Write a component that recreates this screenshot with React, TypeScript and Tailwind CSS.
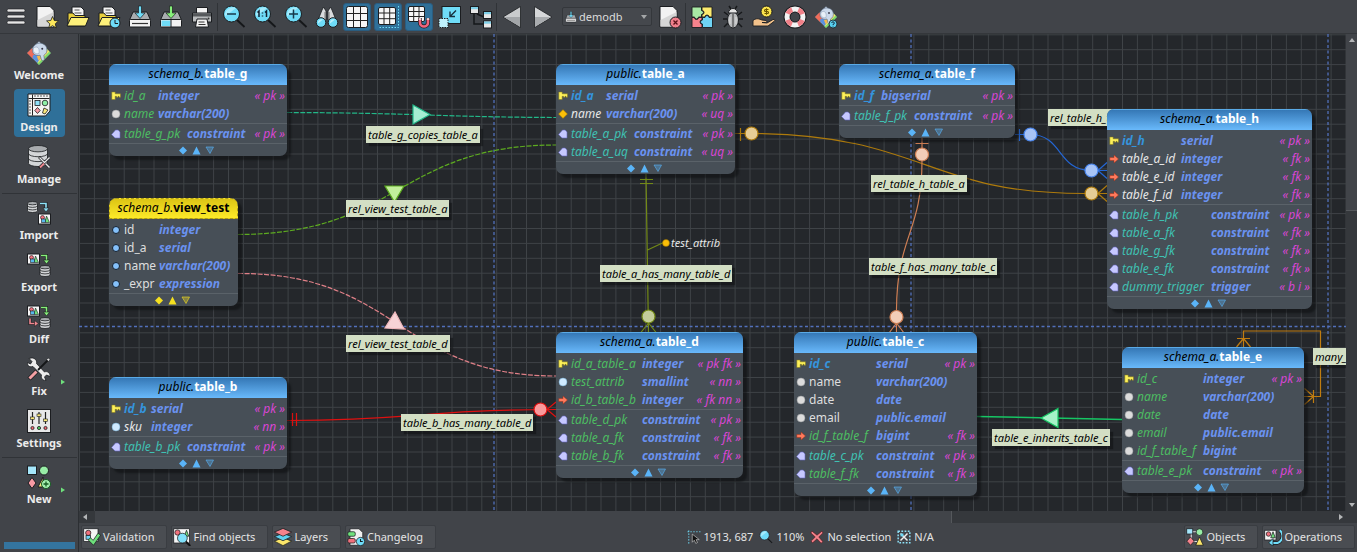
import type { ReactNode } from 'react';
import clsx from 'clsx';

/* ------------------------------------------------------------------ */
/* Icons                                                               */
/* ------------------------------------------------------------------ */

const OUT = '#1b1d20';

function Svg({ size = 24, children }: { size?: number; children: ReactNode }) {
  return (
    <svg width={size} height={size} viewBox="0 0 24 24" fill="none" className="shrink-0" aria-hidden="true">
      {children}
    </svg>
  );
}

const MenuIcon = () => (
  <Svg>
    {[4, 10, 16].map(y => (
      <rect key={y} x="3" y={y} width="18" height="3" rx="1.5" fill="#e6e6e6" stroke={OUT} strokeWidth=".6" />
    ))}
  </Svg>
);

const Sheet = () => (
  <>
    <path d="M2 1.5h13l4 4V22H2z" fill="#f2f2f2" stroke={OUT} />
    <path d="M2.5 21.5V15L18.5 7v14.5z" fill="#d6d6d6" />
  </>
);

const NewIcon = () => (
  <Svg>
    <Sheet />
    <path d="m17.500 11.500 1.800 4 4.200.400-3.200 2.900 1 4.200-3.800-2.300-3.700 2.300 1-4.200-3.200-2.900 4.200-.4z" fill="#fde85c" stroke={OUT} strokeWidth=".8" />
  </Svg>
);

const Folder = () => (
  <>
    <path d="M6 2h9l3 3v9H6z" fill="#f4f4f4" stroke={OUT} />
    <path d="M8.500 5h5M8.500 8h7" stroke="#555" />
    <path d="M2 8h5l2 2.500h10V21H2z" fill="#e8cf3c" stroke={OUT} />
    <path d="M1 21 5 12.500h18L19.500 21z" fill="#fdf07a" stroke={OUT} />
  </>
);

const OpenIcon = () => <Svg><Folder /></Svg>;

const RecentIcon = () => (
  <Svg>
    <Folder />
    <circle cx="18" cy="18" r="5" fill="#6fdcf8" stroke={OUT} />
    <path d="M18 15v3.500h3" stroke={OUT} />
  </Svg>
);

function Drive({ arrow, split }: { arrow: string; split?: boolean }) {
  return (
    <>
      <path d="M5 7h14l3.500 8H1.500z" fill="#a9acaf" stroke={OUT} />
      <rect x="1.500" y="14.500" width="21" height="7.500" rx="1" fill="#f2f2f2" stroke={OUT} />
      {split ? (
        <>
          <rect x="2.500" y="15.500" width="9" height="5.500" fill="#6fdcf8" />
          <path d="M12 15v7" stroke={OUT} />
        </>
      ) : (
        <path d="M4 18.500h16" stroke="#333" strokeWidth="1.200" />
      )}
      <path d="M10.500 1h3v7h3.500L12 13.500 7 8h3.500z" fill={arrow} stroke={OUT} strokeWidth=".7" />
    </>
  );
}

const SaveIcon = () => <Svg><Drive arrow="#6fdcf8" /></Svg>;
const SaveAsIcon = () => <Svg><Drive arrow="#86f07a" split /></Svg>;

const PrintIcon = () => (
  <Svg>
    <path d="M6.500 2.500h11v6h-11z" fill="#f3f3f3" stroke={OUT} />
    <path d="M2.500 8h19v9h-19z" fill="#b9bbbd" stroke={OUT} />
    <path d="M3 8.500h18v3H3z" fill="#55585b" />
    <circle cx="18.500" cy="13.500" r="1" fill="#333" />
    <path d="M7 14h10l1.500 8h-13z" fill="#f3f3f3" stroke={OUT} />
    <path d="M8.500 17h6M8.500 19.500h7" stroke="#333" />
  </Svg>
);

function ZoomIcon({ kind, size }: { kind?: 'in' | 'out' | 'one'; size?: number }) {
  return (
    <Svg size={size}>
      <path d="m14 14 8.500 8" stroke="#15171a" strokeWidth="1.800" />
      <circle cx="9.500" cy="9" r="8" fill="#6fdcf8" stroke={OUT} />
      <path d="M3 11.500a8 8 0 0 1 11-8.500z" fill="#a5ebfc" />
      {(kind === 'in' || kind === 'out') && <path d="M5 9h9" stroke="#17384a" strokeWidth="1.500" />}
      {kind === 'in' && <path d="M9.500 4.500v9" stroke="#17384a" strokeWidth="1.500" />}
      {kind === 'one' && <path d="M4.500 7.500 6 6v6m6-4.500L13.500 6v6M9.500 7.500v1m0 2v1" stroke="#123" strokeWidth="1.500" />}
    </Svg>
  );
}

const BinocularsIcon = () => (
  <Svg>
    <path d="M8.500 2 11 6v9H3L7 5zM15.500 2 13 6v9h8L17 5z" fill="#d9dbdd" stroke={OUT} strokeWidth=".8" />
    <path d="M10 7v7m4-7v7" stroke="#777" />
    <circle cx="6" cy="17.500" r="4.800" fill="#6fdcf8" stroke={OUT} />
    <circle cx="18" cy="17.500" r="4.800" fill="#6fdcf8" stroke={OUT} />
    <path d="M3 18.500a3.600 3.600 0 0 1 5-4zM15 18.500a3.600 3.600 0 0 1 5-4z" fill="#b9f0fc" />
  </Svg>
);

const GridIcon = () => (
  <Svg>
    <rect x="1.500" y="1.500" width="21" height="21" rx="2" fill="#f6f6f6" stroke={OUT} />
    <path d="M8.500 2v20M15.500 2v20M2 8.500h20M2 15.500h20" stroke="#222" />
  </Svg>
);

const PageGridIcon = () => (
  <Svg>
    <rect x="2.500" y="2.500" width="17" height="17" rx="1.500" fill="#f6f6f6" stroke={OUT} />
    <path d="M8 3v16M13.700 3v16M3 8h16M3 13.700h16" stroke="#222" />
    <path d="M22.500 1v21.500H2" stroke="#6fdcf8" strokeDasharray="1.500 1.500" />
  </Svg>
);

const MagnetGridIcon = () => (
  <Svg>
    <rect x="1.500" y="1.500" width="16" height="15" rx="1.500" fill="#f6f6f6" stroke={OUT} />
    <path d="M6.700 2v14M12 2v14M2 6.500h15M2 11.500h15" stroke="#222" />
    <path d="M13 13v4.500a4 4 0 0 0 8 0V13" stroke={OUT} strokeWidth="4" />
    <path d="M13 13.500v4a4 4 0 0 0 8 0v-4" stroke="#f0647c" strokeWidth="2.600" />
    <path d="M11.700 14h2.600m5.400 0h2.600" stroke="#f4f4f4" strokeWidth="1.600" />
  </Svg>
);

const ExpandIcon = () => (
  <Svg>
    <rect x="4" y="1.500" width="18.500" height="17" fill="#6fdcf8" stroke={OUT} />
    <rect x="1" y="13.500" width="9" height="9" fill="#bff1fd" stroke={OUT} strokeDasharray="1.500 1" />
    <path d="M18 5.500 12 11.500m0-5v5h5" stroke="#173040" strokeWidth="1.400" />
  </Svg>
);

const TreeIcon = () => (
  <Svg>
    <path d="M5 9v10h9M8 9l7 3" stroke="#15171a" strokeWidth="1.500" />
    {[[1.500, 1.500], [14.500, 6.500], [14.500, 16]].map(([x, y]) => (
      <g key={y}>
        <rect x={x} y={y} width="8" height="7" fill="#e8e8e8" stroke={OUT} />
        <rect x={x + 0.500} y={y + 0.500} width="7" height="2.200" fill="#7fd0e8" />
      </g>
    ))}
  </Svg>
);

const PrevIcon = () => (
  <Svg>
    <path d="M20.500 1.500v21L3 12z" fill="#c9cbcd" stroke={OUT} strokeWidth=".8" />
    <path d="M20 12v9.700L4 12z" fill="#a3a6a9" />
  </Svg>
);

const NextIcon = () => (
  <Svg>
    <path d="M3.500 1.500v21L21 12z" fill="#d5d7d9" stroke={OUT} strokeWidth=".8" />
    <path d="M4 12v9.700L20 12z" fill="#a9acaf" />
  </Svg>
);

const CloseDocIcon = () => (
  <Svg>
    <Sheet />
    <circle cx="17.500" cy="17.500" r="5.500" fill="#f0808c" stroke={OUT} />
    <path d="m15.500 15.500 4 4m0-4-4 4" stroke="#5a1018" strokeWidth="1.300" />
  </Svg>
);

const PuzzleIcon = () => (
  <Svg>
    <path d="M2 2h9.500v3.500a2 2 0 0 1 0 4V12H8.500a2 2 0 0 1-4 0H2z" fill="#a9e8a4" stroke={OUT} strokeWidth=".9" />
    <path d="M12 2h10v10h-3a2 2 0 0 0-4 0h-3V9.500a2 2 0 0 0 0-4z" fill="#fdeb6e" stroke={OUT} strokeWidth=".9" />
    <path d="M2 12.500h2.500a2 2 0 0 0 4 0H12V15a2 2 0 0 0 0 4v3.500H2z" fill="#f7838d" stroke={OUT} strokeWidth=".9" />
    <path d="M12.500 12.500H15a2 2 0 0 1 4 0h3.500v10h-10V19a2 2 0 0 1 0-4z" fill="#6fd4f5" stroke={OUT} strokeWidth=".9" />
  </Svg>
);

const BugIcon = () => (
  <Svg>
    <path d="M7 10 3 7M17 10l4-3M6 14H2m16 0h4M7 18l-4 4m14-4 4 4M10 4 8 1m6 3 2-3" stroke="#17191b" strokeWidth="1.500" />
    <ellipse cx="12" cy="15" rx="5.500" ry="8" fill="#b9bbbd" stroke={OUT} />
    <path d="M7.500 8a4.500 4.500 0 0 1 9 0z" fill="#e4e4e4" stroke={OUT} />
    <path d="M12 9v13" stroke="#333" />
    <path d="M9 12v7m6-7v7" stroke="#dcdcdc" />
  </Svg>
);

const DonateIcon = () => (
  <Svg>
    <circle cx="14.500" cy="6.500" r="5.500" fill="#fbe34d" stroke={OUT} />
    <path d="M16.500 4.500h-3a1 1 0 0 0 0 2h2a1 1 0 0 1 0 2h-3M14.500 3.200v6.600" stroke="#6a5600" strokeWidth="1.100" />
    <path d="M1 15.500c4-3 6-1.500 9-.5l4 .5c1.500.5 1 2-.500 2H10l5 .5 6-3.500c2-.500 2.500 1 1 2L16 21H1z" fill="#f3c28b" stroke={OUT} strokeWidth=".9" />
  </Svg>
);

const LifebuoyIcon = () => (
  <Svg>
    <circle cx="12" cy="12" r="8" stroke={OUT} strokeWidth="7" />
    <circle cx="12" cy="12" r="8" stroke="#f3f3f3" strokeWidth="5" />
    <circle cx="12" cy="12" r="8" stroke="#f08088" strokeWidth="5" strokeDasharray="6.280 6.280" strokeDashoffset="-3.140" />
  </Svg>
);

function ElephantIcon({ help }: { help?: boolean }) {
  return (
    <Svg size={help ? 24 : 26}>
      <path d="m12 1 11 11-11 11L1 12z" fill="#b9c6d8" stroke="#3a4048" strokeWidth=".6" />
      <path d="M5.500 7.500 1 12l5.500 5.500 4-4.500z" fill="#ef6c5a" />
      <path d="m18 7 5 5-11 11-2-2z" fill="#7ddb6a" />
      <path d="m19.500 8.500 2 2L11.500 21l-1.500-1.500z" fill="#fbe66a" />
      <path d="m6.500 14 5-1 2 4-3 4-4.500-4.500z" fill="#5b93e0" />
      <path d="m10 15 3-1 1 3-2.500 2z" fill="#f6b84c" />
      <path d="M10 3.500C13 2 18 3.500 19 7c1 3 0 6-2.500 7l.5 4c-1 1.500-3 1-3-.5l-1-3.500C9 15 6 13 6 9.500 6 7 7.500 4.500 10 3.500z" fill="#cbd9ea" stroke="#5a6a80" strokeWidth=".6" />
      <path d="M7 7.500c3-2.500 6-.5 5 5-3.500 1-6-1.500-5-5z" fill="#e8f0f8" stroke="#8c9cb4" strokeWidth=".5" />
      <circle cx="15" cy="8" r=".9" fill="#334" />
      {help && (
        <>
          <circle cx="19" cy="19" r="4" fill="#58d0f0" stroke={OUT} strokeWidth=".8" />
          <path d="M17.700 18a1.300 1.300 0 1 1 1.300 1.400v.6m0 .8v.7" stroke="#123" strokeWidth=".9" />
        </>
      )}
    </Svg>
  );
}

const DesignIcon = () => (
  <Svg>
    <path d="M1 1h22v17l-4.500 5H1z" fill="#f5f5f5" stroke={OUT} />
    <path d="M1.500 5.500h21M5.500 1.500v21" stroke="#222" />
    <path d="M8 2v2M11 2v2M14 2v2M17 2v2M20 2v2M2 8h2M2 11h2M2 14h2M2 17h2M2 20h2" stroke="#333" strokeWidth=".8" />
    <rect x="8" y="7.500" width="5" height="5" fill="#8fe0f8" stroke={OUT} strokeWidth=".8" />
    <circle cx="18" cy="10" r="2.800" fill="#8ff0a8" stroke={OUT} strokeWidth=".8" />
    <path d="m10.500 14.500 2.700 3-2.700 3-2.700-3z" fill="#f79aa4" stroke={OUT} strokeWidth=".8" />
    <path d="m15.500 20 1.500-5 4 2-3 4z" fill="#fbe87a" stroke={OUT} strokeWidth=".8" />
  </Svg>
);

function Cylinder({ x, y, w, h }: { x: number; y: number; w: number; h: number }) {
  const ry = w / 6;
  return (
    <g transform={`translate(${x} ${y})`} stroke={OUT} strokeWidth=".8">
      <path d={`M0 ${ry}v${h - 2 * ry}a${w / 2} ${ry} 0 0 0 ${w} 0V${ry}z`} fill="#d4d6d8" />
      {[1, 2].map(i => (
        <path key={i} d={`M0 ${ry + ((h - 2 * ry) * i) / 3}a${w / 2} ${ry} 0 0 0 ${w} 0`} />
      ))}
      <ellipse cx={w / 2} cy={ry} rx={w / 2} ry={ry} fill="#a9acaf" />
    </g>
  );
}

function Shapes({ x, y }: { x: number; y: number }) {
  return (
    <g transform={`translate(${x} ${y})`}>
      <rect x=".5" y=".5" width="12" height="10" fill="#f6f6f6" stroke={OUT} />
      <circle cx="4.500" cy="4" r="2" fill="#f0707c" stroke={OUT} strokeWidth=".6" />
      <path d="m8.500 2.500 3 6.500H7z" fill="#6ee07c" stroke={OUT} strokeWidth=".6" />
      <rect x="3.500" y="5.500" width="4" height="3.500" fill="#58b8ec" stroke={OUT} strokeWidth=".6" />
    </g>
  );
}

const Turn = ({ color, d, head }: { color: string; d: string; head: string }) => (
  <>
    <path d={d} stroke={OUT} strokeWidth="3" />
    <path d={d} stroke={color} strokeWidth="1.600" />
    <path d={head} fill={color} stroke={OUT} strokeWidth=".6" />
  </>
);

const ManageIcon = () => (
  <Svg>
    <Cylinder x={1.500} y={0.500} w={19} h={21} />
    <path d="m12 12 10 10m0-9-10 10" stroke={OUT} strokeWidth="2.600" />
    <path d="m12.500 12.500 5 5 5-5" stroke="#e8e8e8" strokeWidth="1.300" />
    <path d="m13 22.500 4-4" stroke="#f08890" strokeWidth="1.800" />
    <path d="m18.500 18.500 4 4" stroke="#e8e8e8" strokeWidth="1.500" />
  </Svg>
);

const ImportIcon = () => (
  <Svg>
    <Cylinder x={0.500} y={0.500} w={10} h={11} />
    <Turn color="#8fe4fa" d="M13 2.500h6V8" head="M16 7h6l-3 4z" />
    <Shapes x={11} y={12.500} />
  </Svg>
);

const ExportIcon = () => (
  <Svg>
    <Shapes x={0} y={0.500} />
    <Turn color="#86f07a" d="M14 2.500h5.500V8" head="M16.500 7h6l-3 4z" />
    <Cylinder x={13} y={12.500} w={10} h={11} />
  </Svg>
);

const DiffIcon = () => (
  <Svg>
    <Shapes x={0} y={0.500} />
    <Turn color="#86f07a" d="M14 2.500h5.500V8" head="M16.500 7h6l-3 4z" />
    <Turn color="#f08890" d="M3 13.500v5h5" head="M7.500 15.500v6l4-3z" />
    <Cylinder x={13} y={12.500} w={10} h={11} />
  </Svg>
);

const FixIcon = () => (
  <Svg>
    <path d="M2 1.500 5 4.500 3.500 7 .5 5.500C0 9 3 10.500 6 9.500L14.500 18c-1 3 1 5.500 4.500 5.500L17.500 20l2-2 3.500 1.500c.5-3-2.500-6-5.500-4.500L9.500 6.500C10.500 3 7 .5 4 1z" fill="#ececec" stroke={OUT} strokeWidth=".8" />
    <path d="M22 2 11 13" stroke="#141618" strokeWidth="1.800" />
    <path d="m19.500 2.500 2-1.500 1.500 1.500-1.500 2z" fill="#ddd" stroke={OUT} strokeWidth=".6" />
    <path d="m10 14-8 8" stroke={OUT} strokeWidth="4.500" />
    <path d="m9.500 14.500-7 7" stroke="#f5a0a4" strokeWidth="3" />
  </Svg>
);

const SettingsIcon = () => (
  <Svg>
    <rect x=".500" y=".500" width="23" height="23" fill="#e8e8e8" stroke={OUT} />
    <path d="M5.500 3v12M12 3v12M18.500 3v12" stroke="#222" strokeWidth="1.200" />
    {[[5.500, 9], [12, 6], [18.500, 11]].map(([x, y]) => (
      <rect key={x} x={x - 2} y={y - 1} width="4" height="2.400" fill="#fbe87a" stroke={OUT} strokeWidth=".6" />
    ))}
    {[[5.500, '#f0606c'], [12, '#4cc860'], [18.500, '#f0606c']].map(([x, c]) => (
      <circle key={x} cx={x} cy="19" r="1.600" fill={c as string} stroke={OUT} strokeWidth=".8" />
    ))}
  </Svg>
);

const AddIcon = () => (
  <Svg>
    <rect x=".500" y="1" width="9" height="8.500" fill="#a5e6fa" stroke={OUT} />
    <circle cx="17" cy="5.500" r="4.500" fill="#98eea6" stroke={OUT} />
    <path d="m5 12.500 4 5.500-4 5.500L1 18z" fill="#f79aa4" stroke={OUT} />
    <path d="m16 12-5 10h5z" fill="#fbe87a" stroke={OUT} />
    <circle cx="19" cy="19" r="4.500" fill="#a5f0b0" stroke="#175c22" />
    <path d="M16.500 19h5M19 16.500v5" stroke="#175c22" strokeWidth="1.300" />
  </Svg>
);

const ValidationIcon = () => (
  <Svg size={18}>
    <rect x="1" y="1" width="19" height="17" fill="#f5f5f5" stroke={OUT} />
    <circle cx="7" cy="6.500" r="3.500" fill="#f0707c" stroke={OUT} />
    <rect x="4" y="10" width="6" height="5" fill="#6fd4f5" stroke={OUT} />
    <path d="m7 16 3-3 3.500 3.500L20 7l3.500 2.500L14 23z" fill="#6ee07c" stroke={OUT} />
  </Svg>
);

const FindIcon = () => (
  <Svg size={18}>
    <rect x="1" y="1" width="21" height="19" fill="#f5f5f5" stroke={OUT} />
    <circle cx="6" cy="6" r="3.500" fill="#f0707c" stroke={OUT} />
    <path d="m18 3 3 8h-6z" fill="#6ee07c" stroke={OUT} />
    <path d="m17 18 6 6" stroke="#111" strokeWidth="2.500" />
    <circle cx="12.500" cy="13.500" r="6.500" fill="#7fe0fa" stroke={OUT} />
  </Svg>
);

const LayersIcon = () => (
  <Svg size={18}>
    <path d="m12 13 11.500 4.500L12 23.500.5 17.500z" fill="#fbe66a" stroke={OUT} />
    <path d="m12 7 11.500 4.500L12 17 .5 11.500z" fill="#5fd0f0" stroke={OUT} />
    <path d="m12 .5 11.500 5L12 11 .5 5.500z" fill="#f5828c" stroke={OUT} />
  </Svg>
);

const ChangelogIcon = () => (
  <Svg size={18}>
    <path d="M4 1h12l5 5v17H4z" fill="#efefef" stroke={OUT} />
    <rect x="1" y="5" width="10" height="6" rx="2" fill="#6ee07c" stroke={OUT} />
    <rect x="1" y="14" width="10" height="6" rx="2" fill="#f0707c" stroke={OUT} />
    <circle cx="18" cy="18" r="5.500" fill="#6fdcf8" stroke={OUT} />
    <path d="M18 14.500V18h3" stroke={OUT} strokeWidth="1.400" />
  </Svg>
);

const PointerIcon = () => (
  <Svg size={14}>
    <path d="M9 7v14l3.500-3.500L15 23l3-1.500-2.500-5H21z" fill="#111" stroke="#ddd" />
    <path d="M3 1v22M1 3h22" stroke="#6fdcf8" strokeWidth="2" strokeDasharray="2 3" />
  </Svg>
);

const CrossIcon = () => (
  <Svg size={14}>
    <path d="M3.500 2 12 9l8.500-7L22 5l-7 7 7 8-3 2.500-7-7.500-7.500 7L2 19l7-7-7.500-7z" fill="#f5848c" stroke="#5a1018" />
  </Svg>
);

const SelectionIcon = () => (
  <Svg size={14}>
    <path d="M2 2h20v20H2z" stroke="#8fe4fa" strokeWidth="2.500" strokeDasharray="3 2.500" />
    <path d="m6 6 12 12M18 6 6 18" stroke="#eee" strokeWidth="2.500" />
    <rect x="6" y="6" width="5" height="5" fill="#6fdcf8" />
  </Svg>
);

const ObjectsIcon = () => (
  <Svg size={18}>
    <path d="M7 5h10M7 5v13h10" stroke="#ddd" strokeWidth="1.500" />
    <rect x="1" y="1" width="8" height="7" fill="#a5e6fa" stroke={OUT} />
    <circle cx="18" cy="5.500" r="4.500" fill="#98eea6" stroke={OUT} />
    <path d="m6 12 5 5.500L6 23l-5-5.500z" fill="#f5828c" stroke={OUT} />
    <path d="m18 12 5 11H13z" fill="#fbe66a" stroke={OUT} />
  </Svg>
);

const OperationsIcon = () => (
  <Svg size={18}>
    <rect x="1" y="3" width="15" height="13" fill="#f5f5f5" stroke={OUT} />
    <circle cx="6" cy="8" r="3" fill="#f0707c" stroke={OUT} />
    <path d="m12 5 3 8H9z" fill="#6ee07c" stroke={OUT} />
    <path d="M21 3a10 10 0 0 1-3 17h-7" stroke={OUT} strokeWidth="4.500" />
    <path d="M21 3a10 10 0 0 1-3 17h-7" stroke="#6fdcf8" strokeWidth="2.500" />
    <path d="m12 14-6 6 6 4z" fill="#6fdcf8" stroke={OUT} />
  </Svg>
);

/* ------------------------------------------------------------------ */
/* Model data                                                          */
/* ------------------------------------------------------------------ */

type Mark = 'key' | 'plain' | 'notnull' | 'view' | 'unique' | 'fk' | 'tag';
type Tone = 'green' | 'teal' | 'pk' | 'light' | 'roman';
type Row = [mark: Mark, name: string, tone: Tone, type: string, flags?: string];

interface Section {
  cols: string;
  rows: Row[];
}

interface Entity {
  schema: string;
  name: string;
  place: string;
  view?: boolean;
  sections: Section[];
}

const TONES: Record<Tone, string> = {
  green: 'italic text-[#4dbd62]',
  teal: 'italic text-[#3fc1b3]',
  pk: 'italic font-bold text-[#3594dc]',
  light: 'italic text-[#e6e6e6]',
  roman: 'text-[#dedede]',
};

const ENTITIES: Entity[] = [
  {
    schema: 'schema_b', name: 'table_g', place: 'left-[30px] top-[30px] w-[178px]',
    sections: [
      {
        cols: 'grid-cols-[14px_34px_1fr_auto]',
        rows: [
          ['key', 'id_a', 'green', 'integer', '« pk »'],
          ['plain', 'name', 'green', 'varchar(200)'],
        ],
      },
      { cols: 'grid-cols-[14px_63px_1fr_auto]', rows: [['tag', 'table_g_pk', 'green', 'constraint', '« pk »']] },
    ],
  },
  {
    schema: 'schema_b', name: 'view_test', view: true, place: 'left-[30px] top-[164px] w-[129px]',
    sections: [
      {
        cols: 'grid-cols-[14px_35px_1fr_auto]',
        rows: [
          ['view', 'id', 'roman', 'integer'],
          ['view', 'id_a', 'roman', 'serial'],
          ['view', 'name', 'roman', 'varchar(200)'],
          ['view', '_expr', 'roman', 'expression'],
        ],
      },
    ],
  },
  {
    schema: 'public', name: 'table_b', place: 'left-[30px] top-[343px] w-[178px]',
    sections: [
      {
        cols: 'grid-cols-[14px_27px_1fr_auto]',
        rows: [
          ['key', 'id_b', 'pk', 'serial', '« pk »'],
          ['notnull', 'sku', 'light', 'integer', '« nn »'],
        ],
      },
      { cols: 'grid-cols-[14px_63px_1fr_auto]', rows: [['tag', 'table_b_pk', 'teal', 'constraint', '« pk »']] },
    ],
  },
  {
    schema: 'public', name: 'table_a', place: 'left-[477px] top-[30px] w-[179px]',
    sections: [
      {
        cols: 'grid-cols-[14px_35px_1fr_auto]',
        rows: [
          ['key', 'id_a', 'pk', 'serial', '« pk »'],
          ['unique', 'name', 'light', 'varchar(200)', '« uq »'],
        ],
      },
      {
        cols: 'grid-cols-[14px_63px_1fr_auto]',
        rows: [
          ['tag', 'table_a_pk', 'teal', 'constraint', '« pk »'],
          ['tag', 'table_a_uq', 'teal', 'constraint', '« uq »'],
        ],
      },
    ],
  },
  {
    schema: 'schema_a', name: 'table_d', place: 'left-[477px] top-[298px] w-[187px]',
    sections: [
      {
        cols: 'grid-cols-[14px_71px_1fr_auto]',
        rows: [
          ['key', 'id_a_table_a', 'green', 'integer', '« pk fk »'],
          ['notnull', 'test_attrib', 'green', 'smallint', '« nn »'],
          ['fk', 'id_b_table_b', 'green', 'integer', '« fk nn »'],
        ],
      },
      {
        cols: 'grid-cols-[14px_71px_1fr_auto]',
        rows: [
          ['tag', 'table_d_pk', 'green', 'constraint', '« pk »'],
          ['tag', 'table_a_fk', 'green', 'constraint', '« fk »'],
          ['tag', 'table_b_fk', 'green', 'constraint', '« fk »'],
        ],
      },
    ],
  },
  {
    schema: 'schema_a', name: 'table_f', place: 'left-[760px] top-[30px] w-[176px]',
    sections: [
      { cols: 'grid-cols-[14px_27px_1fr_auto]', rows: [['key', 'id_f', 'pk', 'bigserial', '« pk »']] },
      { cols: 'grid-cols-[14px_60px_1fr_auto]', rows: [['tag', 'table_f_pk', 'teal', 'constraint', '« pk »']] },
    ],
  },
  {
    schema: 'public', name: 'table_c', place: 'left-[715px] top-[298px] w-[183px]',
    sections: [
      {
        cols: 'grid-cols-[14px_67px_1fr_auto]',
        rows: [
          ['key', 'id_c', 'pk', 'serial', '« pk »'],
          ['plain', 'name', 'roman', 'varchar(200)'],
          ['plain', 'date', 'roman', 'date'],
          ['plain', 'email', 'roman', 'public.email'],
          ['fk', 'id_f_table_f', 'green', 'bigint', '« fk »'],
        ],
      },
      {
        cols: 'grid-cols-[14px_67px_1fr_auto]',
        rows: [
          ['tag', 'table_c_pk', 'teal', 'constraint', '« pk »'],
          ['tag', 'table_f_fk', 'green', 'constraint', '« fk »'],
        ],
      },
    ],
  },
  {
    schema: 'schema_a', name: 'table_h', place: 'left-[1028px] top-[75px] w-[205px]',
    sections: [
      {
        cols: 'grid-cols-[14px_59px_1fr_auto]',
        rows: [
          ['key', 'id_h', 'pk', 'serial', '« pk »'],
          ['fk', 'table_a_id', 'light', 'integer', '« fk »'],
          ['fk', 'table_e_id', 'light', 'integer', '« fk »'],
          ['fk', 'table_f_id', 'light', 'integer', '« fk »'],
        ],
      },
      {
        cols: 'grid-cols-[14px_89px_1fr_auto]',
        rows: [
          ['tag', 'table_h_pk', 'teal', 'constraint', '« pk »'],
          ['tag', 'table_a_fk', 'teal', 'constraint', '« fk »'],
          ['tag', 'table_g_fk', 'teal', 'constraint', '« fk »'],
          ['tag', 'table_e_fk', 'teal', 'constraint', '« fk »'],
          ['tag', 'dummy_trigger', 'teal', 'trigger', '« b i »'],
        ],
      },
    ],
  },
  {
    schema: 'schema_a', name: 'table_e', place: 'left-[1043px] top-[313px] w-[182px]',
    sections: [
      {
        cols: 'grid-cols-[14px_66px_1fr_auto]',
        rows: [
          ['key', 'id_c', 'green', 'integer', '« pk »'],
          ['plain', 'name', 'green', 'varchar(200)'],
          ['plain', 'date', 'green', 'date'],
          ['plain', 'email', 'green', 'public.email'],
          ['plain', 'id_f_table_f', 'green', 'bigint'],
        ],
      },
      { cols: 'grid-cols-[14px_66px_1fr_auto]', rows: [['tag', 'table_e_pk', 'green', 'constraint', '« pk »']] },
    ],
  },
];

const LABELS = [
  { text: 'table_g_copies_table_a', place: 'left-[287px] top-[92px]' },
  { text: 'rel_view_test_table_a', place: 'left-[267px] top-[166px]' },
  { text: 'rel_view_test_table_d', place: 'left-[267px] top-[301px]' },
  { text: 'table_b_has_many_table_d', place: 'left-[322px] top-[380px]' },
  { text: 'table_a_has_many_table_d', place: 'left-[521px] top-[231px]' },
  { text: 'rel_table_h_table_a', place: 'left-[792px] top-[141px]' },
  { text: 'table_f_has_many_table_c', place: 'left-[790px] top-[224px]' },
  { text: 'rel_table_h_table_f', place: 'left-[969px] top-[75px]' },
  { text: 'table_e_inherits_table_c', place: 'left-[913px] top-[395px]' },
  { text: 'many_', place: 'left-[1234px] top-[314px]' },
];

/* ------------------------------------------------------------------ */
/* Canvas                                                              */
/* ------------------------------------------------------------------ */

function RowMark({ mark }: { mark: Mark }) {
  return (
    <svg className="ml-px" width="10" height="10" viewBox="0 0 10 10" aria-hidden="true">
      {mark === 'key' && <path d="M.8 1h3.400v1.800h5.300v3.400H8V5.300H7v1H5.500v-1H4.200v3.200H.8z" fill="#fdf05a" stroke="#7d7218" strokeWidth=".5" />}
      {mark === 'plain' && <circle cx="5" cy="5" r="4" fill="#dcdcdc" stroke="#8e9194" strokeWidth=".5" />}
      {mark === 'notnull' && <circle cx="5" cy="5" r="4" fill="#cfeaff" stroke="#6fa6cc" strokeWidth=".5" />}
      {mark === 'view' && <circle cx="5" cy="5" r="3.500" fill="#84c0fa" stroke="#16202c" />}
      {mark === 'unique' && <path d="m5 .5 4.500 4.500L5 9.500.5 5z" fill="#fbbf08" stroke="#8a6500" strokeWidth=".5" />}
      {mark === 'fk' && <path d="M.8 3.500H5V1l4.500 4L5 9V6.500H.8z" fill="#ff7a5c" stroke="#a03018" strokeWidth=".5" />}
      {mark === 'tag' && <path d="M4.500 1h2.700L9 3v6H4L.6 5.500z" fill="#c6c8ff" stroke="#6466c0" strokeWidth=".6" />}
    </svg>
  );
}

function EntityNode({ entity }: { entity: Entity }) {
  const { view } = entity;
  const c = view ? '#f5e020' : '#5ab4f8';
  return (
    <article
      className={clsx(
        'absolute flex flex-col overflow-hidden rounded-[7px] bg-[#474f57] text-[12px] leading-[18px] shadow-[4px_4px_2px_rgba(12,14,16,0.55)]',
        entity.place,
      )}
    >
      <h2
        className={clsx(
          'flex h-[21px] justify-center leading-[18px]',
          view
            ? 'rounded-t-[7px] border border-dashed border-[#a8981c] bg-linear-to-b from-[#dcc414] to-[#fdea28]'
            : 'border-t border-[#5aaae6] bg-linear-to-b from-[#3578b6] to-[#69b9fb]',
        )}
      >
        <span className="italic text-black">{entity.schema}.</span>
        <span className={clsx('font-bold', view ? 'text-black' : 'text-white')}>{entity.name}</span>
      </h2>
      {entity.sections.map((section, i) => (
        <ul key={i} className={i > 0 ? 'border-t border-[#5a6269] pt-px' : 'pt-[2px]'}>
          {section.rows.map(([mark, name, tone, type, flags]) => (
            <li key={name} className={clsx('grid items-center pl-px pr-[2px] whitespace-nowrap', section.cols)}>
              <RowMark mark={mark} />
              <span className={TONES[tone]}>{name}</span>
              <span className="font-bold italic text-[#6a92f0]">{type}</span>
              <span className="italic text-[#d846d4]">{flags}</span>
            </li>
          ))}
        </ul>
      ))}
      <div className="flex h-[13px] items-center justify-center border-t border-[#5a6269] pr-1">
        <svg width="36" height="9" viewBox="0 0 36 9" aria-hidden="true">
          <path d="m5 .5 4 4-4 4-4-4z" fill={c} />
          <path d="M14.500 8.500h8l-4-8z" fill={c} />
          <path d="M28 1h7.500L32 7.500z" fill={c} fillOpacity=".35" stroke={c} strokeOpacity=".6" />
        </svg>
      </div>
    </article>
  );
}

// The view is zoomed, so a model grid step does not land on whole pixels.
const GRID = 14.9;
const PAGE_COLUMNS = [415, 832, 1249];

function Background() {
  return (
    <svg className="absolute inset-0 size-full" aria-hidden="true">
      <g stroke="#3f4347">
        {Array.from({ length: 180 }, (_, i) => (
          <line key={i} x1={i * GRID + 0.5} x2={i * GRID + 0.5} y1="0" y2="100%" />
        ))}
        {Array.from({ length: 90 }, (_, i) => (
          <line key={i} x1="0" x2="100%" y1={i * GRID + 0.8} y2={i * GRID + 0.8} />
        ))}
      </g>
      <g stroke="#5270bb" strokeWidth="1.300" strokeDasharray="3 2.500">
        {PAGE_COLUMNS.map(x => (
          <line key={x} x1={x} x2={x} y1="0" y2="100%" />
        ))}
        <line x1="0" x2="100%" y1="292.500" y2="292.500" />
      </g>
    </svg>
  );
}

function Relationships() {
  return (
    <svg className="absolute inset-0 size-full" fill="none" strokeWidth="1.200" aria-hidden="true">
      {/* table_g copies table_a */}
      <g stroke="#22b788">
        <path d="M208 78.500C340 79 360 83 477 83.500" strokeDasharray="5 1.500" />
        <path d="M334 71v19l17-9.500z" fill="#a6ecd2" />
      </g>
      {/* view_test depends on table_a and table_d */}
      <g stroke="#5dab20">
        <path d="M159 200.500C320 200 320 111 477 111" strokeDasharray="5 1.500" />
        <path d="M306 152h19l-9.500 16z" fill="#c2ee9c" />
      </g>
      <g stroke="#e08088">
        <path d="M159 239.500C320 239 320 342 477 342" strokeDasharray="5 1.500" />
        <path d="m316 278-10 16 19 1z" fill="#f7d3d6" stroke="#f0b8bc" />
      </g>
      {/* table_b 1:n table_d */}
      <g stroke="#e01010">
        <path d="M208 386.500C340 386 340 376 477 375.500M213.500 379v13M217.500 379v13M468 375.500l9-7.500m-9 7.500 9 7.500" />
        <circle cx="461.500" cy="375.500" r="6.500" fill="#f99a9c" />
      </g>
      {/* table_a 1:n table_d */}
      <g stroke="#738a16">
        <path d="m567 140 2.500 159M561 145.500h13M561 149.500h13M569.500 289l-8 10m8-10 8 10M568.500 216l17-8" />
        <circle cx="569.500" cy="282.500" r="6.500" fill="#c3cd9a" />
        <circle cx="587" cy="209" r="3.500" fill="#fbbf08" stroke="#8a6500" strokeWidth=".5" />
      </g>
      {/* table_a 1:n table_h */}
      <g stroke="#ad7a0c">
        <path d="M656 99.500h17C846 101 846 159.500 1006 159.500h22M661.500 94v13M1019 159.500l9-8m-9 8 9 8" />
        <circle cx="672.500" cy="99.500" r="6.500" fill="#e6cd96" />
        <circle cx="1012.500" cy="159.500" r="6.500" fill="#e6cd96" />
      </g>
      {/* table_f 1:n table_c */}
      <g stroke="#cf7f54">
        <path d="M843 103v23C843 200 818 200 817.500 276v23M836.500 109.500h13M817.500 289l-7.500 10m7.500-10 7.500 10" />
        <circle cx="843" cy="120.500" r="6.500" fill="#f2cdb8" />
        <circle cx="817.500" cy="283" r="6.500" fill="#f2cdb8" />
      </g>
      {/* table_f 1:n table_h */}
      <g stroke="#2466d4">
        <path d="M936 100.500h15C984 100.500 978 136.500 1012 136.500h16M940.500 95v12M1019 136.500l9-8m-9 8 9 8" />
        <circle cx="951.500" cy="100.500" r="6.500" fill="#a8c4f6" stroke="#4a86ee" />
        <circle cx="1012.500" cy="136.500" r="6.500" fill="#a8c4f6" stroke="#4a86ee" />
      </g>
      {/* table_e inherits table_c */}
      <g stroke="#16c664">
        <path d="m898 382.500 145 3" strokeWidth="1.500" />
        <path d="m962 384 17-9.500v19z" fill="#a6f2c8" />
      </g>
      {/* table_e n:n table_e */}
      <path
        d="M1164.500 313v-16h77v65.500H1225M1158 304.500h13M1164.500 304.500l-7 8.500m7-8.500 7 8.500M1234.500 356v13M1234.500 362.500l-9-8m9 8-9 8"
        stroke="#c07c10"
      />
    </svg>
  );
}

function Canvas() {
  return (
    <main className="relative min-w-0 flex-1 overflow-hidden bg-[#24272b]">
      <Background />
      <Relationships />
      {LABELS.map(label => (
        <span
          key={label.text}
          className={clsx(
            'absolute bg-[#d3dfc4] px-[2px] text-[11px] italic leading-[17px] whitespace-nowrap text-black shadow-[3px_3px_1px_rgba(12,14,16,0.5)]',
            label.place,
          )}
        >
          {label.text}
        </span>
      ))}
      <span className="absolute left-[592px] top-[200px] text-[11px] italic leading-[17px] text-[#e6e6e6]">test_attrib</span>
      {ENTITIES.map(entity => (
        <EntityNode key={entity.name} entity={entity} />
      ))}
    </main>
  );
}

/* ------------------------------------------------------------------ */
/* Window chrome                                                       */
/* ------------------------------------------------------------------ */

function Tool({ label, active, children }: { label: string; active?: boolean; children: ReactNode }) {
  return (
    <button
      type="button"
      aria-label={label}
      aria-pressed={active}
      className={clsx('flex size-7 shrink-0 items-center justify-center rounded-[3px]', active && 'border border-[#2a5d80] bg-[#2f7099]')}
    >
      {children}
    </button>
  );
}

function Toolbar() {
  return (
    <header className="flex h-[34px] shrink-0 items-center border-b border-[#34373b] bg-[#414449] pl-[2px]">
      <div className="flex gap-[3px]">
        <Tool label="Menu"><MenuIcon /></Tool>
        <Tool label="New model"><NewIcon /></Tool>
        <Tool label="Open model"><OpenIcon /></Tool>
        <Tool label="Recent models"><RecentIcon /></Tool>
        <Tool label="Save"><SaveIcon /></Tool>
        <Tool label="Save as"><SaveAsIcon /></Tool>
        <Tool label="Print"><PrintIcon /></Tool>
      </div>
      <div className="ml-px flex gap-[3px] border-l border-[#303337] pl-[2px]">
        <Tool label="Zoom out"><ZoomIcon kind="out" /></Tool>
        <Tool label="Normal zoom"><ZoomIcon kind="one" /></Tool>
        <Tool label="Zoom in"><ZoomIcon kind="in" /></Tool>
        <Tool label="Overview"><BinocularsIcon /></Tool>
      </div>
      <div className="ml-[2px] flex gap-[3px]">
        <Tool label="Show grid" active><GridIcon /></Tool>
        <Tool label="Show page delimiters" active><PageGridIcon /></Tool>
        <Tool label="Align to grid" active><MagnetGridIcon /></Tool>
        <Tool label="Compact view"><ExpandIcon /></Tool>
        <Tool label="Arrange objects"><TreeIcon /></Tool>
      </div>
      <div className="ml-px flex gap-[3px] border-l border-[#303337] pl-px">
        <Tool label="Previous model"><PrevIcon /></Tool>
        <Tool label="Next model"><NextIcon /></Tool>
      </div>
      <label className="ml-[5px] mr-1 flex h-[19px] w-[90px] items-center rounded-[2px] border border-[#34373b] bg-[#45484d] pl-[2px] pr-1">
        <Svg size={12}><Drive arrow="#6fdcf8" /></Svg>
        <select aria-label="Current model" className="min-w-0 flex-1 appearance-none bg-transparent pl-[2px] text-[11px] leading-4 text-[#dcdcdc]">
          <option>demodb</option>
        </select>
        <svg width="6" height="4" viewBox="0 0 6 4" aria-hidden="true"><path d="M0 0h6L3 4z" fill="#a4a6a8" /></svg>
      </label>
      <Tool label="Close model"><CloseDocIcon /></Tool>
      <div className="ml-px flex gap-[3px] border-l border-[#303337] pl-[2px]">
        <Tool label="Plugins"><PuzzleIcon /></Tool>
        <Tool label="Report a bug"><BugIcon /></Tool>
        <Tool label="Donate"><DonateIcon /></Tool>
        <Tool label="Support"><LifebuoyIcon /></Tool>
        <Tool label="About"><ElephantIcon help /></Tool>
      </div>
    </header>
  );
}

function SideButton({ label, icon, active, more }: { label: string; icon: ReactNode; active?: boolean; more?: boolean }) {
  return (
    <button
      type="button"
      className={clsx(
        'relative flex h-12 w-[51px] flex-col items-center rounded-[4px] pt-1 text-[11px] font-bold leading-[19px] text-[#ececec]',
        active && 'bg-[#2f7099]',
      )}
    >
      <span className="flex h-6 items-center">{icon}</span>
      {label}
      {more && (
        <svg className="absolute right-0 bottom-4" width="4" height="6" viewBox="0 0 4 6" aria-hidden="true">
          <path d="m0 .5 4 2.500-4 2.500z" fill="#6ee07c" />
        </svg>
      )}
    </button>
  );
}

const SideRule = () => <hr className="-mb-px w-[75px] border-t border-[#303337]" />;

function Sidebar() {
  return (
    <nav className="flex w-[79px] shrink-0 flex-col items-center gap-1 border-r border-[#2c2f33] bg-[#414449] pb-[3px] pt-[3px]">
      <SideButton label="Welcome" icon={<ElephantIcon />} />
      <SideButton label="Design" icon={<DesignIcon />} active />
      <SideButton label="Manage" icon={<ManageIcon />} />
      <SideRule />
      <SideButton label="Import" icon={<ImportIcon />} />
      <SideButton label="Export" icon={<ExportIcon />} />
      <SideButton label="Diff" icon={<DiffIcon />} />
      <SideButton label="Fix" icon={<FixIcon />} more />
      <SideButton label="Settings" icon={<SettingsIcon />} />
      <SideRule />
      <SideButton label="New" icon={<AddIcon />} more />
      <div className="mt-auto h-[7px] w-[71px] bg-[#34749e]" />
    </nav>
  );
}

function DockButton({ label, icon }: { label: string; icon: ReactNode }) {
  return (
    <button
      type="button"
      className="flex h-6 items-center gap-[2px] rounded-[2px] border border-[#3a3d42] bg-[#4a4d52] pl-px pr-3 text-[11px] leading-4 text-[#e4e4e4]"
    >
      {icon}
      {label}
    </button>
  );
}

function StatusBar() {
  return (
    <footer className="flex h-[29px] shrink-0 items-start justify-between bg-[#414449] px-[2px] pt-[2px]">
      <div className="flex gap-1">
        <DockButton label="Validation" icon={<ValidationIcon />} />
        <DockButton label="Find objects" icon={<FindIcon />} />
        <DockButton label="Layers" icon={<LayersIcon />} />
        <DockButton label="Changelog" icon={<ChangelogIcon />} />
      </div>
      <div className="flex h-6 items-center gap-[6px] text-[11px] leading-4 text-[#e4e4e4]">
        <span className="flex items-center gap-[3px]"><PointerIcon />1913, 687</span>
        <span className="flex items-center gap-[3px]"><ZoomIcon size={14} />110%</span>
        <span className="flex items-center gap-[3px]"><CrossIcon />No selection</span>
        <span className="flex items-center gap-[3px]"><SelectionIcon />N/A</span>
      </div>
      <div className="flex gap-1">
        <DockButton label="Objects" icon={<ObjectsIcon />} />
        <DockButton label="Operations" icon={<OperationsIcon />} />
      </div>
    </footer>
  );
}

function VerticalScroll() {
  return (
    <div className="flex w-[11px] shrink-0 flex-col items-center justify-between bg-[#35383c]">
      <div className="flex h-[177px] w-full flex-col items-center border-b border-[#55585c] bg-[#414449] pt-1">
        <svg width="6" height="4" viewBox="0 0 6 4" aria-hidden="true"><path d="M0 4h6L3 0z" fill="#b4b6b8" /></svg>
      </div>
      <svg className="mb-1" width="6" height="4" viewBox="0 0 6 4" aria-hidden="true"><path d="M0 0h6L3 4z" fill="#b4b6b8" /></svg>
    </div>
  );
}

function HorizontalScroll() {
  return (
    <div className="flex h-3 shrink-0 items-center bg-[#35383c] pl-1 pr-[14px]">
      <svg width="4" height="6" viewBox="0 0 4 6" aria-hidden="true"><path d="M4 0v6L0 3z" fill="#b4b6b8" /></svg>
      <div className="ml-2 h-full w-[68%] border-r border-[#55585c] bg-[#414449]" />
      <svg className="ml-auto" width="4" height="6" viewBox="0 0 4 6" aria-hidden="true"><path d="M0 0v6l4-3z" fill="#b4b6b8" /></svg>
    </div>
  );
}

export default function App() {
  return (
    <div className="flex h-screen flex-col overflow-hidden bg-[#414449] font-['Noto_Sans','Open_Sans',sans-serif]">
      <Toolbar />
      <div className="flex min-h-0 flex-1">
        <Sidebar />
        <div className="flex min-w-0 flex-1 flex-col">
          <div className="flex min-h-0 flex-1">
            <Canvas />
            <VerticalScroll />
          </div>
          <HorizontalScroll />
          <StatusBar />
        </div>
      </div>
    </div>
  );
}
